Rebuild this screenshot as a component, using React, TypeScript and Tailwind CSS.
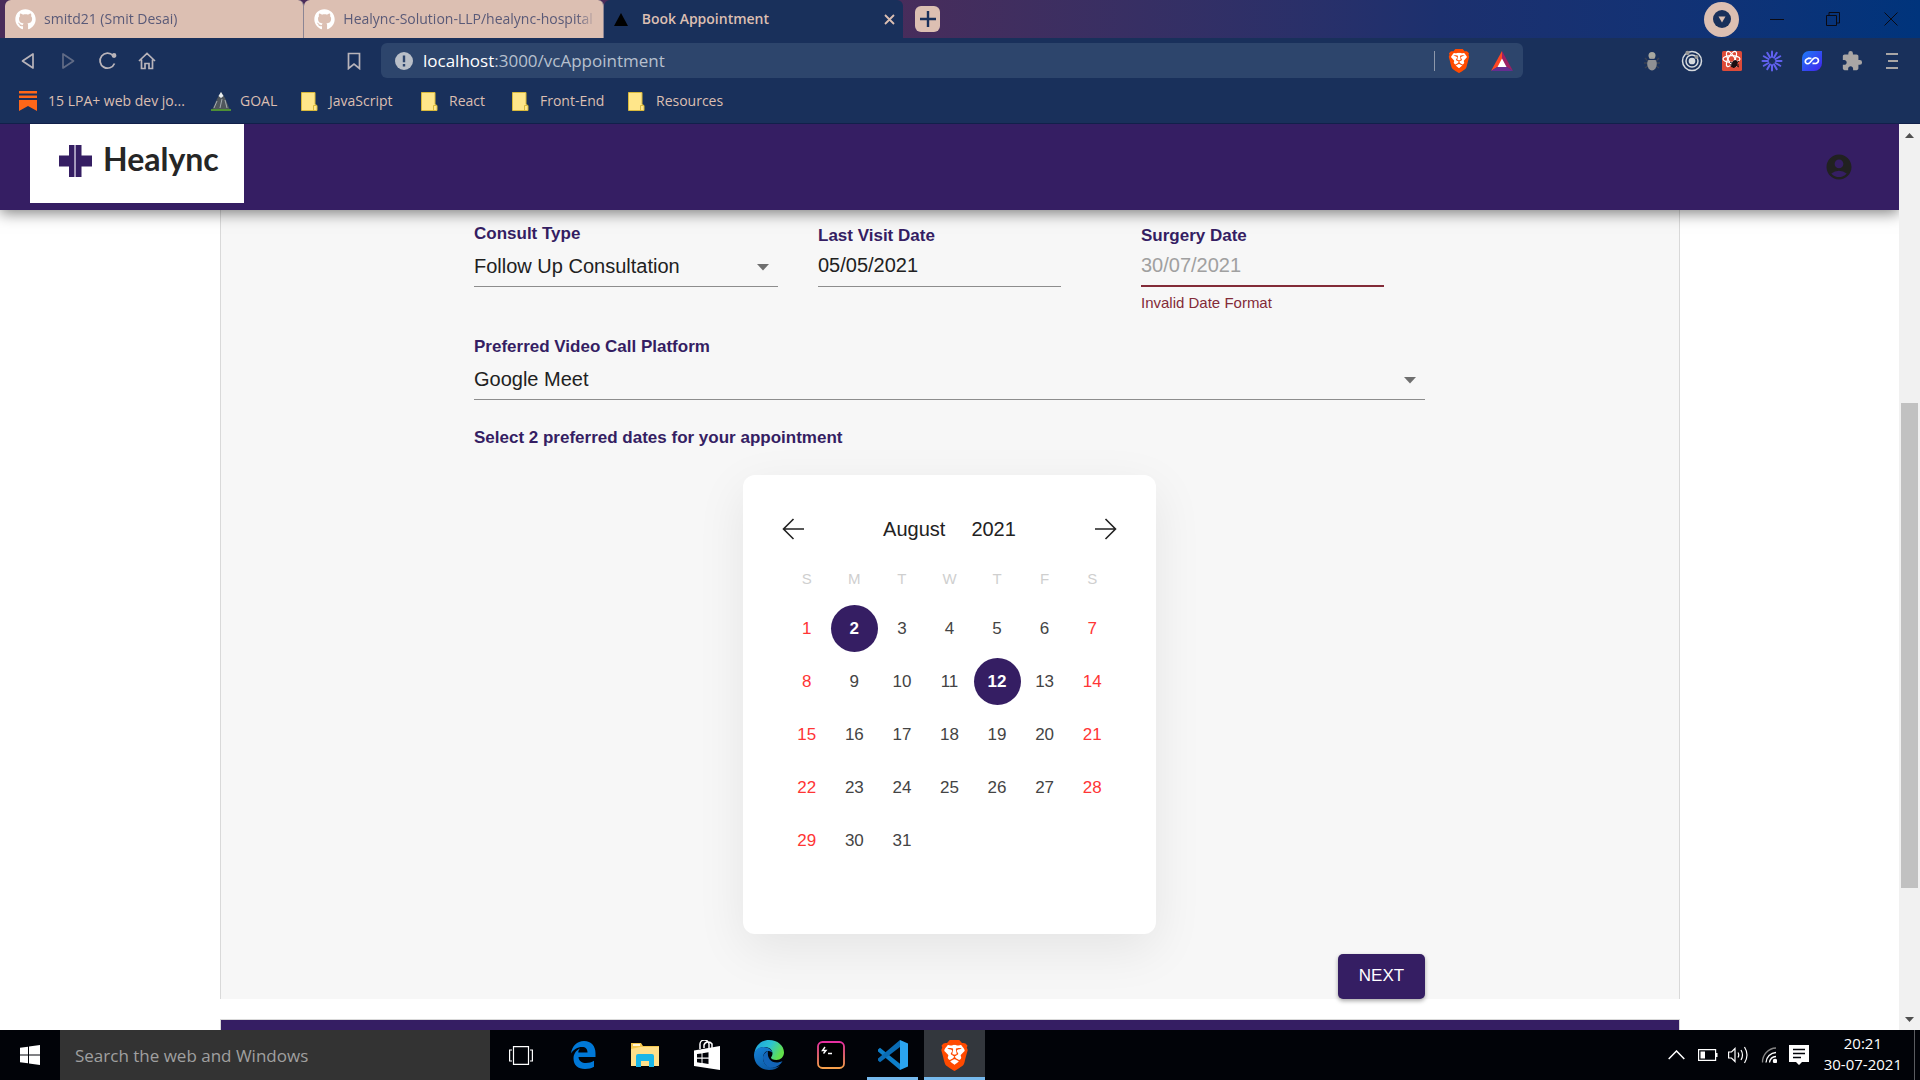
import type { ReactNode } from 'react';
import { FaGithub } from 'react-icons/fa';
import { SiBrave } from 'react-icons/si';
import { MdAccountCircle, MdExtension } from 'react-icons/md';

const WEEKDAYS = ['S', 'M', 'T', 'W', 'T', 'F', 'S'];
const WEEKS = [0, 1, 2, 3, 4].map((w) => [1, 2, 3, 4, 5, 6, 7].map((d) => w * 7 + d));
const SELECTED = [2, 12];

const uiFont = "font-['Open_Sans','Noto_Sans',sans-serif]";

function Tab({ title, active, children }: { title: string; active?: boolean; children: ReactNode }) {
  return (
    <div
      className={
        active
          ? 'flex h-full min-w-0 items-center gap-3 rounded-t-md bg-[#19305b] pr-1.5 pl-2.5 text-[#dcbfb2]'
          : 'flex h-full min-w-0 items-center gap-2 rounded-t-md border-r border-[#8b8594] bg-[#dcbfb2] pr-1.5 pl-2.5 text-[#5a5a78]'
      }
    >
      {children}
      <span
        className={
          active
            ? 'min-w-0 flex-1 overflow-hidden text-sm font-semibold whitespace-nowrap'
            : 'min-w-0 flex-1 overflow-hidden text-sm whitespace-nowrap [mask-image:linear-gradient(to_right,black_92%,transparent)]'
        }
      >
        {title}
      </span>
      {active && (
        <button aria-label="Close tab" className="flex size-4 items-center justify-center">
          <svg width="11" height="11" viewBox="0 0 11 11" stroke="#dcbfb2" strokeWidth="1.8">
            <path d="M1 1l9 9M10 1l-9 9" />
          </svg>
        </button>
      )}
    </div>
  );
}

function TabStrip() {
  return (
    <div className="flex h-[38px] items-center bg-linear-to-r from-[#4a2c5a] from-45% via-[#1c306e] via-75% to-[#00347c] pl-[5px]">
      <div className="grid h-full w-[898px] min-w-0 grid-cols-3">
        <Tab title="smitd21 (Smit Desai)">
          <FaGithub className="size-[21px] shrink-0 text-white" />
        </Tab>
        <Tab title="Healync-Solution-LLP/healync-hospital">
          <FaGithub className="size-[21px] shrink-0 text-white" />
        </Tab>
        <Tab title="Book Appointment" active>
          <svg className="mr-0.5 shrink-0" width="14" height="13" viewBox="0 0 14 13">
            <path d="M7 0l7 13H0z" fill="#000" />
          </svg>
        </Tab>
      </div>
      <button aria-label="New tab" className="ml-3 flex h-[26px] w-[25px] items-center justify-center rounded-md bg-[#dcbfb2]">
        <svg width="16" height="16" viewBox="0 0 16 16" stroke="#19305b" strokeWidth="2.4">
          <path d="M8 0v16M0 8h16" />
        </svg>
      </button>
      <div className="ml-auto flex items-center">
        <button aria-label="Search tabs" className="mr-[31px] flex size-[35px] items-center justify-center rounded-full bg-[#dcbfb2]">
          <svg width="18" height="18" viewBox="0 0 18 18">
            <circle cx="9" cy="9" r="9" fill="#19305b" />
            <path d="M5.500 6.500h7L9 12.500z" fill="#dcbfb2" />
          </svg>
        </button>
        <button aria-label="Minimize" className="mr-[42px]">
          <svg width="14" height="14" stroke="#0a0a14"><path d="M0 7.500h14" /></svg>
        </button>
        <button aria-label="Restore" className="mr-[44px]">
          <svg width="14" height="14" fill="none" stroke="#0a0a14"><path d="M.5 3.500h10v10H.5zM3 3V.5h10.500V11H11" /></svg>
        </button>
        <button aria-label="Close window" className="mr-[22px]">
          <svg width="14" height="14" stroke="#0a0a14"><path d="M.5.5l13 13M13.500.5l-13 13" /></svg>
        </button>
      </div>
    </div>
  );
}

function BraveIcon({ className }: { className: string }) {
  return (
    <span className={className + ' grid shrink-0 place-items-center'}>
      <svg viewBox="0 0 24 24" className="col-start-1 row-start-1 size-full">
        <path d="M6 3.500h12l3 4-2.500 10L12 22l-6.500-4.500L3 7.500z" fill="#fff" />
      </svg>
      <SiBrave className="col-start-1 row-start-1 size-full text-[#ff4a00]" />
    </span>
  );
}

function Toolbar() {
  return (
    <div className="flex h-[45px] items-center">
      <div className="flex w-[381px] shrink-0 items-center pl-[20px] text-[#b9b4ba]">
        <button aria-label="Back" className="w-10">
          <svg width="16" height="18" viewBox="0 0 16 18" fill="none" stroke="currentColor" strokeWidth="1.700"><path d="M13 2v14L2.500 9z" strokeLinejoin="round" /></svg>
        </button>
        <button aria-label="Forward" className="w-[38px] opacity-45">
          <svg width="16" height="18" viewBox="0 0 16 18" fill="none" stroke="currentColor" strokeWidth="1.700"><path d="M3 2v14L13.500 9z" strokeLinejoin="round" /></svg>
        </button>
        <button aria-label="Reload" className="w-10">
          <svg width="20" height="20" viewBox="0 0 20 20" fill="none" stroke="currentColor" strokeWidth="1.800">
            <path d="M16.500 12.500A7.500 7.500 0 1 1 15 4.500" /><circle cx="16" cy="4.500" r="1.500" fill="currentColor" />
          </svg>
        </button>
        <button aria-label="Home">
          <svg width="18" height="18" viewBox="0 0 18 18" fill="none" stroke="currentColor" strokeWidth="1.700">
            <path d="M1 9l8-7.500L17 9M3.500 7.500v9h3.500v-5h4v5h3.500v-9" />
          </svg>
        </button>
        <button aria-label="Bookmark this page" className="mr-5 ml-auto">
          <svg width="14" height="18" viewBox="0 0 14 18" fill="none" stroke="currentColor" strokeWidth="1.700"><path d="M1.500 1.500h11v15L7 12l-5.500 4.500z" /></svg>
        </button>
      </div>
      <div className="flex h-[35px] min-w-0 flex-1 items-center rounded-md bg-[#2d456c] pr-2.5 pl-3.5">
        <svg width="18" height="18" viewBox="0 0 18 18" className="shrink-0">
          <circle cx="9" cy="9" r="9" fill="#b9bfc8" />
          <path d="M9 3.500v6.800M9 12v2.500" stroke="#2d456c" strokeWidth="2.400" />
        </svg>
        <div className="ml-2.5 min-w-0 flex-1 text-[17px] text-[#b7c0ce]" role="textbox" aria-label="Address">
          <span className="text-white">localhost</span>:3000/vcAppointment
        </div>
        <span className="mr-3 h-5 w-px bg-[#8d98ab]" />
        <BraveIcon className="mr-5 size-6" />
        <svg width="22" height="20" viewBox="0 0 22 20" className="shrink-0">
          <path d="M11 0L0 20l11-7z" fill="#ff4724" />
          <path d="M11 0l11 20-11-7z" fill="#9e1f63" />
          <path d="M0 20h22l-11-7z" fill="#662d91" />
          <path d="M11 7.500L15.500 16h-9z" fill="#fff" />
        </svg>
      </div>
      <div className="ml-[118px] flex w-[279px] shrink-0 items-center gap-[18px]">
        <svg width="22" height="22" viewBox="0 0 22 22">
          <circle cx="11" cy="5.500" r="3.500" fill="#a8a8a0" />
          <path d="M4 8l3 3M18 8l-3 3M3 13h4M19 13h-4M4 18l3-2M18 18l-3-2" stroke="#3a4153" strokeWidth="1.500" />
          <ellipse cx="11" cy="14" rx="4.800" ry="6.500" fill="#8f9093" />
          <path d="M6 9.500h10" stroke="#19305b" />
        </svg>
        <svg width="22" height="22" viewBox="0 0 22 22" fill="none" stroke="#d6dade" strokeWidth="1.500">
          <circle cx="11" cy="11" r="9.500" /><circle cx="11" cy="11" r="6" /><circle cx="11" cy="11" r="2.600" fill="#d6dade" />
          <circle cx="6.500" cy="3" r="1.400" fill="#999" stroke="#999" /><circle cx="15.500" cy="7" r="1.200" fill="#999" stroke="#999" />
        </svg>
        <svg width="22" height="22" viewBox="0 0 22 22">
          <rect x="1" y="1" width="20" height="20" rx="1.500" fill="#dd4b39" />
          <g fill="none" stroke="#fff" strokeWidth="1.200">
            <ellipse cx="10.500" cy="9" rx="8.500" ry="3.300" />
            <ellipse cx="10.500" cy="9" rx="8.500" ry="3.300" transform="rotate(60 10.500 9)" />
            <ellipse cx="10.500" cy="9" rx="8.500" ry="3.300" transform="rotate(120 10.500 9)" />
          </g>
          <ellipse cx="13.500" cy="14" rx="2.800" ry="4" transform="rotate(25 13.500 14)" fill="#1b0f12" />
          <path d="M9 12l9 5M10 17l8-6M9 15h9" stroke="#1b0f12" />
        </svg>
        <svg width="22" height="22" viewBox="-11 -11 22 22" stroke="#6161f0" strokeWidth="2" strokeLinecap="round">
          {[0, 30, 60, 90, 120, 150, 180, 210, 240, 270, 300, 330].map((a) => (
            <path key={a} d="M0-4V-9.500" transform={`rotate(${a})`} />
          ))}
        </svg>
        <svg width="22" height="22" viewBox="0 0 22 22">
          <defs>
            <linearGradient id="doc" x1="0" y1="0" x2="1" y2="1"><stop offset="0" stopColor="#1c7bf5" /><stop offset="1" stopColor="#4422ee" /></linearGradient>
          </defs>
          <path d="M8 1h13v12a8 8 0 0 1-8 8H1V8a7 7 0 0 1 7-7z" fill="url(#doc)" />
          <path d="M10.500 8.500L7.500 8.200Q3.500 9.500 4.500 12.500Q6.500 15 9 12.500L12 9Q15 6.500 17 9Q18.500 12 15 13.500L11.500 13.300" fill="none" stroke="#fff" strokeWidth="1.700" />
        </svg>
        <MdExtension className="size-[22px] text-[#a9a6a5]" />
        <button aria-label="Menu">
          <svg width="22" height="22" viewBox="0 0 22 22" stroke="#a9a6a5" strokeWidth="2"><path d="M5 4h12M7 11h10M5 18h12" /></svg>
        </button>
      </div>
    </div>
  );
}

function Folder() {
  return (
    <svg width="17" height="19" viewBox="0 0 17 19" className="shrink-0">
      <path d="M.5.5h13.500v12l2 1V18.500H.5z" fill="#ffe68a" stroke="#d9b93c" />
      <path d="M12.500 18v-4.500h3" fill="none" stroke="#d9b93c" />
    </svg>
  );
}

function Bookmarks() {
  const folder = 'flex items-center gap-[11px]';
  return (
    <nav className="flex h-[41px] items-center border-b border-[#11204a] pb-1 pl-[19px] text-sm text-[#dcbfb2]">
      <a href="#jobs" className="mr-5 flex w-[172px] items-center gap-[11px] whitespace-nowrap">
        <svg width="18" height="20" viewBox="0 0 18 20" fill="#ff6719" className="shrink-0">
          <path d="M0 0h18v2.500H0zM0 4.500h18V7H0zM0 9h18v11l-9-5-9 5z" />
        </svg>
        15 LPA+ web dev jo...
      </a>
      <a href="#goal" className="flex w-[90px] items-center gap-[9px]">
        <svg width="20" height="19" viewBox="0 0 20 19" className="shrink-0">
          <path d="M10 0l4 6 5 12H1l5-11z" fill="#4f565c" />
          <path d="M10 0l2.500 4L10 6 7.500 4z" fill="#e9eef0" />
          <path d="M6 9l-3 7M11 7l-2 9M14 8l2 8" stroke="#a3abb0" />
          <path d="M0 17h20v2H0z" fill="#4e8f35" />
        </svg>
        GOAL
      </a>
      <a href="#javascript" className={folder + ' w-[120px]'}><Folder />JavaScript</a>
      <a href="#react" className={folder + ' w-[91px]'}><Folder />React</a>
      <a href="#front-end" className={folder + ' w-[116px]'}><Folder />Front-End</a>
      <a href="#resources" className={folder}><Folder />Resources</a>
    </nav>
  );
}

const labelClass = 'block h-6 text-[17px] leading-5 font-bold text-[#351e63]';
const dateLabelClass = 'block h-6 text-[17px] leading-6 font-bold text-[#351e63]';

function SelectField({ id, label, value }: { id: string; label: string; value: string }) {
  return (
    <div>
      <label htmlFor={id} className={labelClass}>{label}</label>
      <div className="relative">
        <select id={id} className="h-[39px] w-full appearance-none border-b border-[#8d8d8d] bg-transparent pb-[3px] text-xl text-[#212121] outline-none">
          <option>{value}</option>
        </select>
        <svg className="pointer-events-none absolute top-4 right-[9px]" width="12" height="7" viewBox="0 0 12 7"><path d="M0 0h12L6 6.500z" fill="#6f6f6f" /></svg>
      </div>
    </div>
  );
}

function Calendar() {
  return (
    <section aria-label="Calendar" className="mx-auto mt-[27px] w-[413px] rounded-xl bg-white px-[39px] pt-[34px] pb-[67px] shadow-[0_15px_50px_rgba(0,0,0,0.08)]">
      <div className="flex h-10 items-center justify-between text-xl text-[#222]">
        <button aria-label="Previous month">
          <svg width="23" height="22" viewBox="0 0 23 22" fill="none" stroke="#222" strokeWidth="1.600"><path d="M22 11H2M11.500 1L1.500 11l10 10" /></svg>
        </button>
        <div className="flex gap-[26px]">
          <button>August</button>
          <button>2021</button>
        </div>
        <button aria-label="Next month">
          <svg width="23" height="22" viewBox="0 0 23 22" fill="none" stroke="#222" strokeWidth="1.600"><path d="M1 11h20M11.500 1l10 10-10 10" /></svg>
        </button>
      </div>
      <table className="mx-auto w-[333px] table-fixed text-center text-[17px] text-[#444]">
        <thead>
          <tr className="h-[53px]">
            {WEEKDAYS.map((d, i) => (
              <th key={i} scope="col" className="pt-2 text-[15px] font-normal text-[#cfcfcf]">{d}</th>
            ))}
          </tr>
        </thead>
        <tbody>
          {WEEKS.map((week, w) => (
            <tr key={w} className="h-[53px]">
              {week.map((day, i) => (
                <td key={i} className="p-0">
                  {day <= 31 && (
                    <button
                      className={
                        SELECTED.includes(day)
                          ? 'size-[47px] rounded-full bg-[#351e63] font-bold text-white'
                          : i === 0 || i === 6
                            ? 'size-[47px] text-[#ff3535]'
                            : 'size-[47px]'
                      }
                    >
                      {day}
                    </button>
                  )}
                </td>
              ))}
            </tr>
          ))}
        </tbody>
      </table>
    </section>
  );
}

function Page() {
  return (
    <div className="flex min-h-0 flex-1 bg-white font-['Liberation_Sans',Arial,sans-serif]">
      <main className="flex min-w-0 flex-1 flex-col overflow-hidden">
        <header className="relative z-10 flex h-[86px] shrink-0 items-start justify-between bg-[#351e63] pr-[45px] pl-[30px] shadow-[0_3px_14px_rgba(0,0,0,0.5)]">
          <a href="#home" className="flex h-[79px] w-[214px] items-center gap-[11px] bg-white pb-1.5 pl-[29px]">
            <svg width="33" height="32" viewBox="0 0 33 32">
              <path d="M0 10.500h10V0h5.500v32H10V21.500H0zM33 10.500H22.500V0H17v32h5.500V21.500H33z" fill="#351e63" />
              <path d="M15.500 0H17v32h-1.500z" fill="#a79bc0" />
            </svg>
            <span className="pb-1 font-['Lato',sans-serif] text-[32px] leading-10 font-bold text-[#262626]">Healync</span>
          </a>
          <button aria-label="Account" className="self-center">
            <MdAccountCircle className="size-[30px] text-[#212121]" />
          </button>
        </header>

        <div className="mx-auto w-full max-w-[1460px] border-x border-[#d9d9d9] bg-[#f7f7f7]">
          <form className="mx-auto flex max-w-[951px] flex-col pt-3.5" onSubmit={(e) => e.preventDefault()}>
            <div className="grid grid-cols-[304px_243px_243px] items-start">
              <SelectField id="consult" label="Consult Type" value="Follow Up Consultation" />
              <div className="ml-10 w-[243px]">
                <label htmlFor="visit" className={dateLabelClass}>Last Visit Date</label>
                <input id="visit" defaultValue="05/05/2021" className="h-[39px] w-full border-b border-[#8d8d8d] bg-transparent pb-[3px] text-xl text-[#212121] outline-none" />
              </div>
              <div className="ml-[120px] w-[243px]">
                <label htmlFor="surgery" className={dateLabelClass}>Surgery Date</label>
                <input id="surgery" defaultValue="30/07/2021" aria-invalid="true" aria-describedby="surgery-help" className="h-[39px] w-full border-b-2 border-[#832b38] bg-transparent pb-0.5 text-xl text-[#a0a0a0] outline-none" />
                <p id="surgery-help" className="mt-1.5 text-[15px] leading-5 text-[#832b38]">Invalid Date Format</p>
              </div>
            </div>
            <div className="mt-6">
              <SelectField id="platform" label="Preferred Video Call Platform" value="Google Meet" />
            </div>
            <p className="mt-7 text-[17px] leading-5 font-bold text-[#351e63]">Select 2 preferred dates for your appointment</p>
            <Calendar />
            <button type="submit" className="z-10 mt-5 h-[45px] w-[87px] self-end rounded-[5px] bg-[#351e63] pb-0.5 text-[17px] font-medium text-white shadow-[0_2px_4px_rgba(0,0,0,0.35)]">
              NEXT
            </button>
          </form>
        </div>

        <div className="mx-auto mt-5 min-h-[11px] w-full max-w-[1460px] flex-1 border-x border-t border-[#d9d9d9] bg-[#351e63]" />
      </main>

      <div className="flex w-[21px] flex-col items-center bg-[#f1f1f1] pt-[9px] pb-2" aria-hidden="true">
        <svg width="9" height="5" viewBox="0 0 9 5"><path d="M4.500 0L9 5H0z" fill="#505050" /></svg>
        <div className="min-h-0 w-[17px] flex-[265]" />
        <div className="min-h-0 w-[17px] flex-[485] bg-[#c1c1c1]" />
        <div className="min-h-0 w-[17px] flex-[129]" />
        <svg width="9" height="5" viewBox="0 0 9 5"><path d="M0 0h9L4.500 5z" fill="#505050" /></svg>
      </div>
    </div>
  );
}

function TaskIcon({ label, state, children }: { label: string; state?: 'open' | 'active'; children: ReactNode }) {
  return (
    <button
      aria-label={label}
      className={
        state === 'active'
          ? 'flex h-full w-[61px] items-center justify-center border-b-[3px] border-[#76b9ed] bg-[#33373d] pt-[3px]'
          : state === 'open'
            ? 'mr-[6px] ml-[5px] flex h-full w-[51px] items-center justify-center border-b-[3px] border-[#76b9ed] pt-[3px]'
            : 'flex h-full w-[62px] items-center justify-center'
      }
    >
      {children}
    </button>
  );
}

function Taskbar() {
  return (
    <footer className="flex h-[50px] shrink-0 items-center bg-[#010308]">
      <button aria-label="Start" className="flex w-[60px] justify-center">
        <svg width="20" height="20" viewBox="0 0 20 20" fill="#fff">
          <path d="M0 2.800l8-1.100v7.800H0zM9 1.500L20 0v9.500H9zM0 10.500h8v7.800l-8-1.100zM9 10.500h11V20L9 18.500z" />
        </svg>
      </button>
      <input aria-label="Search the web and Windows" placeholder="Search the web and Windows" className="h-full w-[430px] bg-[#333] px-[15px] text-[17px] text-white outline-none placeholder:text-[#a0a0a0]" />
      <div className="flex h-full">
        <TaskIcon label="Task View">
          <svg width="24" height="19" viewBox="0 0 24 19" fill="none" stroke="#fff" strokeWidth="1.200"><path d="M4.500.6h15v17.800h-15zM3 4H.6v11H3M21 4h2.400v11H21" /></svg>
        </TaskIcon>
        <TaskIcon label="Edge Legacy">
          <svg width="26" height="28" viewBox="0 0 26 28" fill="#0078d7">
            <path d="M1 12.500C2 5 7 0 14 0c7.500 0 11.500 5.500 11.500 12v4h-17c.3 4 3.500 6 7.500 6 3 0 5.500-.8 8-2.200v6C21.500 27.300 18.500 28 15 28 8 28 3.500 24 3.500 17.500 3.500 13 6 9.500 10 7.500 8.800 9 8.300 10 8.300 11.500h9.200c0-3.500-1.800-5.500-5.500-5.500C7.500 6 3.500 8.500 1 12.500z" />
          </svg>
        </TaskIcon>
        <TaskIcon label="File Explorer">
          <svg width="28" height="24" viewBox="0 0 28 24">
            <path d="M0 0h10l2 3h16v20H0z" fill="#f5c84f" />
            <path d="M2 1h7v2H2z" fill="#fff6d8" />
            <path d="M0 6l9-2h19v19H0z" fill="#ffe08a" />
            <path d="M5 24V13a2 2 0 0 1 2-2h14a2 2 0 0 1 2 2v11h-5v-6h-8v6z" fill="#19b6e8" />
          </svg>
        </TaskIcon>
        <TaskIcon label="Store">
          <svg width="28" height="30" viewBox="0 0 28 30">
            <path d="M7 9V5a4.500 4.500 0 0 1 9-1v4M11 8V5a4.500 4.500 0 0 1 8-1v4" fill="none" stroke="#fff" strokeWidth="1.500" />
            <path d="M1 10.500L27 6v24L1 26z" fill="#fff" />
            <path d="M4 14l4.500-.6v4.200H4zM9.500 13.200L15.500 12.300v5.300h-6zM4 18.700h4.500v4.200L4 22.300zM9.500 18.700h6V24l-6-.9z" fill="#010308" />
          </svg>
        </TaskIcon>
        <TaskIcon label="Microsoft Edge">
          <svg width="30" height="30" viewBox="0 0 30 30">
            <defs>
              <linearGradient id="eg" x1="0" y1="0" x2="1" y2=".4"><stop offset="0" stopColor="#1b9fe0" /><stop offset=".55" stopColor="#2cc3d2" /><stop offset="1" stopColor="#62e04c" /></linearGradient>
              <linearGradient id="eb" x1="0" y1="0" x2=".6" y2="1"><stop offset="0" stopColor="#1683d8" /><stop offset="1" stopColor="#0c59a4" /></linearGradient>
            </defs>
            <path d="M.5 13C1.500 5.500 7.500 0 15 0c8.500 0 15 5.500 15 12.500 0 4.500-3.500 7.500-7.500 7.500-3.500 0-5.500-1.300-5.500-2.500 0-.8 1.500-1.500 1.500-4C18.500 9.500 15 7 10.500 7 6 7 2.500 9.500.5 13z" fill="url(#eg)" />
            <path d="M0 15C0 10 4.500 7 9.500 7c5 0 9 3 9 6.500 0-1.500-2-2.500-4-2.500-3.500 0-5.500 3.500-5.500 7 0 6 5 9.500 10.500 9.500 2.500 0 5-.8 6.500-2-2.500 3-6.500 4.500-11 4.500C6.500 30 0 23.500 0 15z" fill="url(#eb)" />
            <path d="M14 11.300C11 12 9 15 9 18c0 6 5 10.500 11 9.500 4-.8 7-3.500 8.500-6.500-8 4-16-.5-14.500-9.700z" fill="#1264b8" />
          </svg>
        </TaskIcon>
        <TaskIcon label="Hyper">
          <svg width="28" height="28" viewBox="0 0 28 28">
            <defs><linearGradient id="hy" x1="0" y1="0" x2="0" y2="1"><stop offset="0" stopColor="#e62ea0" /><stop offset="1" stopColor="#f7a14a" /></linearGradient></defs>
            <rect x="1" y="1" width="26" height="26" rx="4.500" fill="#000" stroke="url(#hy)" strokeWidth="1.800" />
            <path d="M8 6L5.500 9.500H9L6.500 12.500M11 12.500h4" fill="none" stroke="#fff" strokeWidth="1.400" />
          </svg>
        </TaskIcon>
        <TaskIcon label="Visual Studio Code" state="open">
          <svg width="30" height="30" viewBox="0 0 30 30">
            <path d="M0 9.500l2-1.800 20 16V30L0 11.500z" fill="#0e7fca" />
            <path d="M0 20.500l2 1.800L22 7V0L0 18.500z" fill="#0a6cb5" />
            <path d="M22 0l8 3.500v23L22 30z" fill="#2ba4f0" />
          </svg>
        </TaskIcon>
        <TaskIcon label="Brave" state="active">
          <BraveIcon className="size-[31px]" />
        </TaskIcon>
      </div>
      <div className="ml-auto flex h-full items-center text-white">
        <svg width="17" height="10" viewBox="0 0 17 10" fill="none" stroke="#fff" strokeWidth="1.500" className="mr-[13px]"><path d="M.7 9L8.500 1l7.800 8" /></svg>
        <svg width="20" height="12" viewBox="0 0 20 12" className="mr-2.5">
          <path d="M.6.600h17v10.800H.6z" fill="none" stroke="#fff" strokeWidth="1.200" /><path d="M18 4h1.500v4H18zM2.500 2.500H7v7H2.500z" fill="#fff" />
        </svg>
        <svg width="21" height="18" viewBox="0 0 21 18" fill="none" stroke="#fff" strokeWidth="1.200" className="mr-3"><path d="M.6 6v6H3.500L7 15.500v-13L3.500 6zM10 6.500q1.500 2.500 0 5M13 4q3 5 0 10M16.500 1q5 8 0 16" /></svg>
        <svg width="16" height="16" viewBox="0 0 16 16" fill="none" stroke="#fff" strokeWidth="1.300" className="mr-3">
          <path d="M1.500 15.500A14 14 0 0 1 15 1" stroke="#858585" /><path d="M5 15.500A10.500 10.500 0 0 1 15 5.500M8.500 15.500A7 7 0 0 1 15 9.500" /><circle cx="14" cy="14" r="1.600" fill="#fff" />
        </svg>
        <svg width="20" height="20" viewBox="0 0 20 20" className="mr-[15px]">
          <path d="M0 0h20v17h-7l-3 3-3-3H0z" fill="#fff" /><path d="M4 4.500h12M4 8.500h12M4 12.500h8" stroke="#010308" strokeWidth="1.300" />
        </svg>
        <time className="mr-3 pb-0.5 text-center text-[15px] leading-[21px]">
          20:21
          <br />
          30-07-2021
        </time>
        <span className="mr-[5px] h-full w-px bg-[#5a5c60]" />
      </div>
    </footer>
  );
}

export default function App() {
  return (
    <div className={uiFont + ' flex h-screen flex-col overflow-hidden'}>
      <div className="shrink-0 bg-[#19305b]">
        <TabStrip />
        <Toolbar />
        <Bookmarks />
      </div>
      <Page />
      <Taskbar />
    </div>
  );
}
